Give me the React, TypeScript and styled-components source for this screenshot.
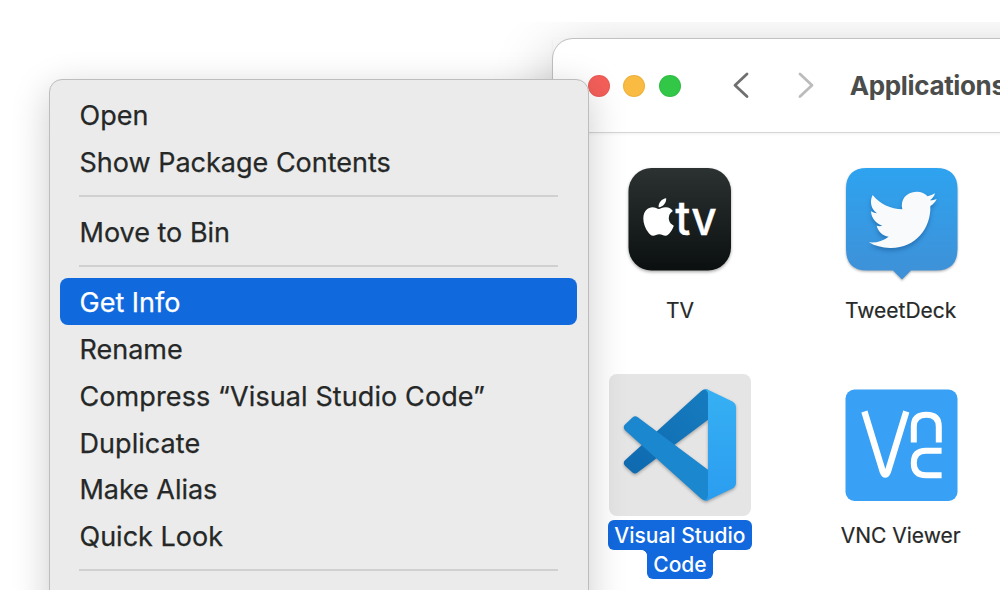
import React from "react";
import styled, { createGlobalStyle, css } from "styled-components";

const GlobalStyle = createGlobalStyle`
  *, *::before, *::after { box-sizing: border-box; }
  body {
    margin: 0;
    background: #fff;
    font-family: Inter, "Liberation Sans", sans-serif;
    overflow: hidden;
  }
  svg { display: block; }
`;

const Stage = styled.main`
  position: relative;
  width: 1000px;
  height: 590px;
  padding-top: 22px;
  overflow: hidden;
`;

const Desktop = styled.div`
  height: 568px;
  padding: 17px 0 0 553px;
  overflow: hidden;
`;

const FinderWindow = styled.section`
  width: 700px;
  height: 800px;
  border-radius: 20px;
  background: #fff;
  box-shadow: 0 0 0 1px #c3c3c3, 0 20px 60px rgba(0, 0, 0, 0.3);
`;

const Toolbar = styled.header`
  display: flex;
  align-items: center;
  height: 94px;
  padding-left: 35px;
  border-bottom: 1px solid #d6d6d6;
  box-shadow: 0 1px 3px rgba(0, 0, 0, 0.06);
`;

const TrafficLights = styled.div`
  display: flex;
  gap: 13.4px;
`;

const Light = styled.span<{ $color: string }>`
  width: 22px;
  height: 22px;
  border-radius: 50%;
  background: ${(p) => p.$color};
  box-shadow: inset 0 0 0 1px rgba(0, 0, 0, 0.05);
`;

const NavButtons = styled.nav`
  display: flex;
  gap: 49px;
  margin: -2px 0 0 52.4px;
`;

const Title = styled.h1`
  margin: 0 0 0 35.5px;
  font-size: 26px;
  font-weight: 700;
  line-height: 32px;
  letter-spacing: -0.35px;
  color: #4b4d4c;
`;

const IconGrid = styled.div`
  display: grid;
  grid-template-columns: 220.5px 221px;
  grid-template-rows: 225px 226px;
  padding: 16px 0 0 16.7px;
`;

const AppItem = styled.article`
  display: flex;
  flex-direction: column;
  align-items: center;
`;

const IconTile = styled.div<{ $selected?: boolean }>`
  width: 142px;
  height: 142px;
  border-radius: 8px;
  background: ${(p) => (p.$selected ? "#e5e5e5" : "transparent")};
`;

const AppName = styled.div`
  margin-top: 5px;
  font-size: 21px;
  line-height: 30px;
  color: #272928;
  -webkit-text-stroke: 0.2px currentColor;
`;

const SelectedName = styled.div`
  display: flex;
  flex-direction: column;
  align-items: center;
  margin-top: 4px;
  font-size: 21px;
  font-weight: 500;
  color: #fff;
`;

const SelectedLine = styled.span<{ $width: number; $tail?: boolean }>`
  position: relative;
  width: ${(p) => p.$width}px;
  height: ${(p) => (p.$tail ? 29 : 30)}px;
  line-height: ${(p) => (p.$tail ? 29 : 32)}px;
  border-radius: ${(p) => (p.$tail ? "0 0 6px 6px" : "6px")};
  background: #1268dd;
  text-align: center;
  white-space: nowrap;

  ${(p) =>
    p.$tail &&
    css`
      &::before,
      &::after {
        content: "";
        position: absolute;
        top: 0;
        width: 5px;
        height: 5px;
      }
      &::before {
        right: 100%;
        background: radial-gradient(circle at 0 100%, transparent 4.5px, #1268dd 5px);
      }
      &::after {
        left: 100%;
        background: radial-gradient(circle at 100% 100%, transparent 4.5px, #1268dd 5px);
      }
    `}
`;

const ContextMenu = styled.div`
  position: absolute;
  left: 49px;
  top: 79px;
  width: 540px;
  height: 620px;
  padding: 11px 11px 11px 10px;
  border: 1px solid #bdbdbd;
  border-radius: 13px;
  background: #ebebeb;
  box-shadow: 0 10px 38px rgba(0, 0, 0, 0.2);
`;

const MenuItem = styled.div<{ $active?: boolean; $spacing: number }>`
  height: 46.8px;
  padding-left: 19.5px;
  border-radius: 8px;
  font-size: 27px;
  line-height: 49px;
  letter-spacing: ${(p) => p.$spacing}px;
  white-space: nowrap;
  background: ${(p) => (p.$active ? "#1169de" : "transparent")};
  color: ${(p) => (p.$active ? "#fff" : "#252827")};
  -webkit-text-stroke: 0.25px currentColor;
`;

const Separator = styled.hr`
  height: 2px;
  margin: 10.5px 19px 10.9px 19px;
  border: 0;
  background: #d0d0d0;
`;

const Chevron = ({ forward = false }: { forward?: boolean }) => (
  <svg width="16" height="28" viewBox="0 0 16 28" fill="none">
    <path
      d={forward ? "M2 3 L14 14.2 L2 25.5" : "M14 3 L2 14.2 L14 25.5"}
      stroke={forward ? "#bcbcbc" : "#707070"}
      strokeWidth="2.8"
      strokeLinecap="round"
      strokeLinejoin="round"
    />
  </svg>
);

const TvIcon = () => (
  <svg width="142" height="142" viewBox="0 0 142 142">
    <defs>
      <linearGradient id="tv-bg" x1="0" y1="0" x2="0" y2="1">
        <stop offset="0" stopColor="#2b3231" />
        <stop offset="1" stopColor="#0b0f10" />
      </linearGradient>
      <filter id="tv-shadow" x="-20%" y="-20%" width="140%" height="140%" colorInterpolationFilters="sRGB">
        <feDropShadow dx="0" dy="1.5" stdDeviation="1.5" floodOpacity="0.35" />
      </filter>
    </defs>
    <rect x="19.5" y="19" width="102.5" height="102.5" rx="23" fill="url(#tv-bg)" filter="url(#tv-shadow)" />
    <path
      transform="translate(34 46.6) scale(0.081 0.0835)"
      fill="#fff"
      d="M318.7 268.7c-.2-36.7 16.4-64.4 50-84.8-18.8-26.9-47.2-41.7-84.7-44.6-35.5-2.8-74.3 20.7-88.5 20.7-15 0-49.4-19.7-76.4-19.7C63.3 141.2 4 184.8 4 273.5q0 39.3 14.4 81.2c12.8 36.7 59 126.7 107.2 125.2 25.2-.6 43-17.9 75.8-17.9 31.8 0 48.3 17.9 76.4 17.9 48.6-.7 90.4-82.5 102.6-119.3-65.2-30.7-61.7-90-61.7-91.9zm-56.6-164.2c27.3-32.4 24.8-61.9 24-72.5-24.1 1.4-52 16.4-67.9 34.9-17.5 19.8-27.8 44.3-25.6 71.9 26.1 2 49.9-11.4 69.5-34.2z"
    />
    <text
      x="66.3"
      y="86.3"
      fill="#fff"
      stroke="#fff"
      strokeWidth="0.3"
      fontFamily="Inter, sans-serif"
      fontSize="47"
      fontWeight="500"
      textLength="41.5"
      lengthAdjust="spacingAndGlyphs"
    >
      tv
    </text>
  </svg>
);

const TweetDeckIcon = () => (
  <svg width="142" height="142" viewBox="0 0 142 142">
    <defs>
      <linearGradient id="td-bg" x1="0" y1="0" x2="0" y2="1">
        <stop offset="0" stopColor="#2ea3f0" />
        <stop offset="1" stopColor="#3f90d6" />
      </linearGradient>
      <filter id="td-shadow" x="-20%" y="-20%" width="140%" height="140%" colorInterpolationFilters="sRGB">
        <feDropShadow dx="0" dy="1.2" stdDeviation="1.2" floodOpacity="0.3" />
      </filter>
      <filter id="bird-shadow" x="-20%" y="-20%" width="140%" height="150%" colorInterpolationFilters="sRGB">
        <feDropShadow dx="0" dy="8" stdDeviation="6" floodColor="#0b3c78" floodOpacity="0.4" />
      </filter>
    </defs>
    <path
      d="M37 19H106Q127.500 19 127.500 40V100Q127.500 121.500 106 121.500H81L72 130.500L63 121.500H37Q16 121.500 16 100V40Q16 19 37 19Z"
      fill="url(#td-bg)"
      filter="url(#td-shadow)"
    />
    <g transform="translate(-10 1) scale(0.33333)">
      <path
        filter="url(#bird-shadow)"
        fill="#f8fafb"
        d="M158 135C180 162 212 177 247 178C240 150 258 125 290 125C305 125 315 131 323 139C331 137 338 134 345 130C343 138 338 146 330 151C337 151 344 149 350 147C346 156 339 163 331 168C334 235 285 296 210 294C185 293 165 288 147 277C169 279 189 273 206 260C188 258 175 245 170 227C176 229 182 229 187 227C168 221 154 205 153 184C159 188 166 190 171 190C153 177 148 155 158 135Z"
      />
    </g>
  </svg>
);

const VsCodeIcon = () => (
  <svg width="142" height="142" viewBox="0 0 142 142">
    <defs>
      <linearGradient id="vs-panel" x1="0" y1="0" x2="0" y2="1">
        <stop offset="0" stopColor="#36b0f3" />
        <stop offset="1" stopColor="#2b9df0" />
      </linearGradient>
      <linearGradient id="vs-back" x1="1" y1="0" x2="0" y2="1">
        <stop offset="0" stopColor="#167cbf" />
        <stop offset="1" stopColor="#0f69af" />
      </linearGradient>
      <filter id="vs-shadow" x="-20%" y="-20%" width="140%" height="140%" colorInterpolationFilters="sRGB">
        <feDropShadow dx="0" dy="1.5" stdDeviation="1.5" floodOpacity="0.3" />
      </filter>
    </defs>
    <g filter="url(#vs-shadow)" transform="translate(0 0.7)">
      <path
        d="M92 16.500Q95 13.500 99 15V45L28.500 97.800Q26 99.800 23.500 97.800L16 91Q13.500 88 16 85.500Z"
        fill="url(#vs-back)"
      />
      <path
        d="M16 55.500Q13.500 52.500 16 49.800L23.500 42.800Q26 40.500 28.500 42.300L99 95V125.500Q95 126.500 92 123.800Z"
        fill="#1b87cf"
      />
      <path
        d="M95 14.800Q97.500 14.300 99.500 15.300L123 26.500Q127 28.500 127 32.500V108Q127 112 123 114L100.500 124.800Q98 126.300 95 125.500Q99 125 99 120.500V19.500Q99 15.500 95 14.800Z"
        fill="url(#vs-panel)"
      />
    </g>
  </svg>
);

const VncIcon = () => (
  <svg width="142" height="142" viewBox="0 0 142 142">
    <rect x="15.500" y="15.500" width="112" height="111.500" rx="9" fill="#38a0f5" />
    <g fill="none" stroke="#fff" strokeWidth="6" transform="translate(-0.4 0.5)">
      <path strokeWidth="6.4" d="M34.800 37L53 96.500Q55.700 103.500 58.500 96.500L76.700 37" />
      <path d="M84.200 68V52Q84.200 40.200 96.800 40.200Q109.200 40.200 109.200 52V68" />
      <path d="M112 76.300H96.500Q84.200 76.300 84.200 88.500Q84.200 100.800 96.500 100.800H112" />
    </g>
  </svg>
);

type Entry = { label: string; spacing: number; active?: boolean };

const menuGroups: Entry[][] = [
  [
    { label: "Open", spacing: 0 },
    { label: "Show Package Contents", spacing: 0 },
  ],
  [{ label: "Move to Bin", spacing: 0 }],
  [
    { label: "Get Info", spacing: 0, active: true },
    { label: "Rename", spacing: 0 },
    { label: "Compress “Visual Studio Code”", spacing: 0.1 },
    { label: "Duplicate", spacing: 0.05 },
    { label: "Make Alias", spacing: -0.05 },
    { label: "Quick Look", spacing: 0 },
  ],
];

export default function App() {
  return (
    <>
      <GlobalStyle />
      <Stage>
        <Desktop>
          <FinderWindow>
            <Toolbar>
              <TrafficLights>
                <Light $color="#f55f5a" />
                <Light $color="#f9bb41" />
                <Light $color="#33c748" />
              </TrafficLights>
              <NavButtons>
                <Chevron />
                <Chevron forward />
              </NavButtons>
              <Title>Applications</Title>
            </Toolbar>
            <IconGrid>
              <AppItem>
                <IconTile>
                  <TvIcon />
                </IconTile>
                <AppName>TV</AppName>
              </AppItem>
              <AppItem>
                <IconTile>
                  <TweetDeckIcon />
                </IconTile>
                <AppName>TweetDeck</AppName>
              </AppItem>
              <AppItem>
                <IconTile $selected>
                  <VsCodeIcon />
                </IconTile>
                <SelectedName>
                  <SelectedLine $width={144}>Visual Studio</SelectedLine>
                  <SelectedLine $width={66} $tail>
                    Code
                  </SelectedLine>
                </SelectedName>
              </AppItem>
              <AppItem>
                <IconTile>
                  <VncIcon />
                </IconTile>
                <AppName>VNC Viewer</AppName>
              </AppItem>
            </IconGrid>
          </FinderWindow>
        </Desktop>
        <ContextMenu>
          {menuGroups.map((group) => (
            <React.Fragment key={group[0].label}>
              {group.map((item) => (
                <MenuItem key={item.label} $spacing={item.spacing} $active={item.active}>
                  {item.label}
                </MenuItem>
              ))}
              <Separator />
            </React.Fragment>
          ))}
        </ContextMenu>
      </Stage>
    </>
  );
}
